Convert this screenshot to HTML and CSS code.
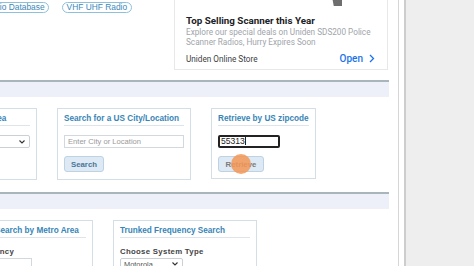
FILE: index.html
```html
<!DOCTYPE html>
<html lang="en">
<head>
    <meta charset="UTF-8">
    <meta name="viewport" content="width=device-width, initial-scale=1.0">
    <title>Scanner Frequency Search</title>
    <link rel="stylesheet" href="styles.css">
</head>
<body>
    <div class="page">
        <div class="main">
            <!-- Top links and ad -->
            <div class="top">
                <div class="pills">
                    <a class="pill pill-first" href="#">Radio Database</a>
                    <a class="pill" href="#">VHF UHF Radio</a>
                </div>
                <div class="ad">
                    <div class="ad-img"></div>
                    <div class="ad-title">Top Selling Scanner this Year</div>
                    <div class="ad-text">Explore our special deals on Uniden SDS200 Police Scanner Radios, Hurry Expires Soon</div>
                    <div class="ad-foot">
                        <span>Uniden Online Store</span>
                        <span class="ad-open">Open
                            <svg width="6" height="9" viewBox="0 0 6 9"><path d="M1 1l3.5 3.5L1 8" fill="none" stroke="#1a73e8" stroke-width="1.3"/></svg>
                        </span>
                    </div>
                </div>
            </div>

            <div class="band"></div>

            <!-- Location searches -->
            <div class="row">
                <div class="card card-area">
                    <div class="card-title">Search by Area</div>
                    <div class="select">
                        <span></span>
                        <svg width="6" height="4" viewBox="0 0 6 4"><path d="M0.5 0.5L3 3l2.5-2.5" fill="none" stroke="#333" stroke-width="1.1"/></svg>
                    </div>
                </div>
                <div class="card card-city">
                    <div class="card-title">Search for a US City/Location</div>
                    <div class="field placeholder">Enter City or Location</div>
                    <button class="btn">Search</button>
                </div>
                <div class="card card-zip">
                    <div class="card-title">Retrieve by US zipcode</div>
                    <div class="field field-focus">55313<span class="caret"></span></div>
                    <div class="btn-wrap">
                        <button class="btn btn-gray">Retrieve</button>
                        <span class="click-dot"></span>
                    </div>
                </div>
            </div>

            <div class="band"></div>

            <!-- Frequency searches -->
            <div class="row">
                <div class="card card-metro">
                    <div class="card-title">Search by Metro Area</div>
                    <div class="label">Frequency</div>
                    <div class="field"></div>
                </div>
                <div class="card card-trunk">
                    <div class="card-title">Trunked Frequency Search</div>
                    <div class="label">Choose System Type</div>
                    <div class="select select-small">
                        <span>Motorola</span>
                        <svg width="6" height="4" viewBox="0 0 6 4"><path d="M0.5 0.5L3 3l2.5-2.5" fill="none" stroke="#333" stroke-width="1.1"/></svg>
                    </div>
                </div>
            </div>
        </div>
        <div class="side"></div>
    </div>
</body>
</html>
```

FILE: styles.css
```css
html, body {
    margin: 0;
    padding: 0;
    background: #fff;
    overflow: hidden;
}
body {
    font-family: "Liberation Sans", Arial, sans-serif;
}
.page {
    display: flex;
    height: 266px;
}
.main {
    width: 398px;
    flex-shrink: 0;
    border-right: 1px solid #d6d6d6;
    overflow: hidden;
}
.side {
    flex: 1;
    margin-left: 5px;
    border-left: 2px solid #cdcdcd;
    background-color: #eeeeee;
}

/* top area */
.top {
    display: flex;
    align-items: flex-start;
    height: 80px;
}
.pills {
    display: flex;
    gap: 13px;
    width: 174px;
    flex-shrink: 0;
    padding-top: 2px;
}
.pill {
    font-size: 8.4px;
    line-height: 9px;
    color: #3a88b9;
    text-decoration: none;
    border: 1px solid #8ec0db;
    border-radius: 8px;
    padding: 0 3.5px;
    white-space: nowrap;
}
.pill-first {
    margin-left: -20px;
}
.ad {
    width: 214px;
    box-sizing: border-box;
    margin-top: -10px;
    border: 1px solid #e8e8e8;
    padding: 0 12px 5px 11px;
    font-family: Roboto, "Liberation Sans", sans-serif;
}
.ad-img {
    width: 11px;
    height: 15px;
    margin-left: 145px;
    background-color: #6e6e6e;
    clip-path: polygon(0 0, 100% 0, 100% 100%, 25% 100%);
}
.ad-title {
    margin-top: 9px;
    font-size: 9.8px;
    font-weight: 700;
    line-height: 11px;
    color: #202124;
}
.ad-text {
    margin-top: 2px;
    font-size: 8.2px;
    line-height: 9.5px;
    color: #a0a5aa;
}
.ad-foot {
    display: flex;
    justify-content: space-between;
    align-items: center;
    margin-top: 6px;
    height: 11px;
    font-size: 8.2px;
    color: #3c4043;
}
.ad-open {
    display: flex;
    align-items: center;
    gap: 6px;
    font-size: 10px;
    font-weight: 500;
    color: #1a73e8;
}

/* grey-blue divider bands */
.band {
    height: 15px;
    margin-right: 9px;
    border-top: 2px solid #a9b4bd;
    background-color: #eef0f9;
}

.row {
    display: flex;
    align-items: flex-start;
    gap: 20px;
    margin: 11px 0 12px;
}
.card {
    box-sizing: border-box;
    flex-shrink: 0;
    border: 1px solid #d3dee7;
    background: #fff;
    padding: 5px 6px 6px;
}
.card-title {
    font-size: 8.2px;
    font-weight: bold;
    line-height: 10px;
    color: #3785b6;
    white-space: nowrap;
    padding-bottom: 1px;
    border-bottom: 1px solid #dde4ea;
    margin-bottom: 9px;
}
.card-area {
    width: 97px;
    height: 72px;
    margin-left: -60px;
}
.card-city {
    width: 134px;
    height: 72px;
}
.card-zip {
    width: 105px;
    height: 71px;
}
.card-metro {
    width: 105px;
    margin-left: -12px;
}
.card-trunk {
    width: 144px;
}

.field {
    box-sizing: border-box;
    height: 13px;
    border: 1px solid #d1d8de;
    font-size: 7.6px;
    line-height: 11px;
    padding: 0 3px;
    color: #333;
}
.placeholder {
    color: #9a9a9a;
}
.field-focus {
    width: 62px;
    border: 2px solid #222;
    border-radius: 2px;
    font-size: 8.6px;
    line-height: 9px;
    padding: 0 1px;
    color: #222;
}
.caret {
    display: inline-block;
    width: 1px;
    height: 8px;
    vertical-align: -1px;
    background: #222;
}
.btn {
    display: block;
    margin-top: 8px;
    height: 16px;
    padding: 0 6px;
    font-family: "Liberation Sans", Arial, sans-serif;
    font-size: 7.8px;
    font-weight: bold;
    color: #4a7697;
    background-color: #dde9f4;
    border: 1px solid #bed2e2;
    border-radius: 3px;
}
.btn-gray {
    width: 46px;
    color: #7b7b7b;
}
.btn-wrap {
    position: relative;
}
.click-dot {
    position: absolute;
    left: 13px;
    top: -2px;
    width: 20px;
    height: 20px;
    border-radius: 50%;
    background-color: rgba(245, 150, 85, 0.85);
}

.select {
    box-sizing: border-box;
    display: flex;
    justify-content: space-between;
    align-items: center;
    height: 13px;
    border: 1px solid #c9d0d6;
    border-radius: 2px;
    padding: 0 4px 0 3px;
    font-size: 7.4px;
    color: #555;
}
.select-small {
    width: 63px;
    height: 12px;
}
.label {
    font-size: 7.8px;
    font-weight: bold;
    letter-spacing: 0.3px;
    line-height: 10px;
    color: #444;
    margin-bottom: 1px;
    white-space: nowrap;
}
.card-metro .label {
    margin-left: -23px;
}
.card-metro .field {
    width: 42px;
    margin-left: -5px;
}
```
